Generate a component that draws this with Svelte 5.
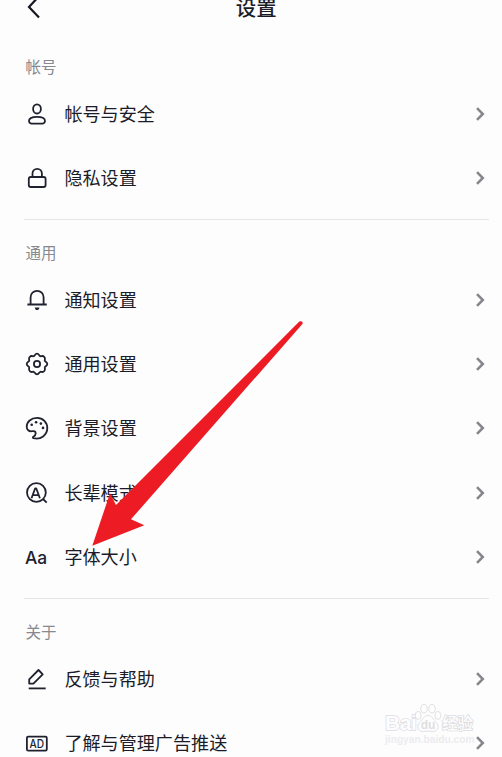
<script>
	const sections = [
		{
			title: '帐号',
			items: [
				{ icon: 'user', label: '帐号与安全' },
				{ icon: 'lock', label: '隐私设置' }
			]
		},
		{
			title: '通用',
			items: [
				{ icon: 'bell', label: '通知设置' },
				{ icon: 'gear', label: '通用设置' },
				{ icon: 'palette', label: '背景设置' },
				{ icon: 'elder', label: '长辈模式' },
				{ icon: 'font', label: '字体大小' }
			]
		},
		{
			title: '关于',
			items: [
				{ icon: 'edit', label: '反馈与帮助' },
				{ icon: 'ad', label: '了解与管理广告推送' }
			]
		}
	];
</script>

<div class="screen">
	<header>
		<svg class="back" viewBox="0 0 14 24">
			<path d="M13 1.2 3 12l10 10.6" />
		</svg>
		<h1>设置</h1>
	</header>

	{#each sections as section}
		<section>
			<h2>{section.title}</h2>
			{#each section.items as item}
				<div class="row">
					<svg class="icon" viewBox="0 0 24 24">
						{#if item.icon === 'user'}
							<ellipse cx="12" cy="6.9" rx="3.9" ry="4.6" />
							<path d="M12 14.9C7.2 14.9 4 16.4 4 18.9C4 21 6 21.7 8.4 21.7H15.6C18 21.7 20 21 20 18.9C20 16.4 16.8 14.9 12 14.9Z" />
						{:else if item.icon === 'lock'}
							<rect x="3.8" y="11" width="16.8" height="10" rx="2" />
							<path d="M7.5 11V7.5a4.7 4.7 0 0 1 9.4 0V11" />
						{:else if item.icon === 'bell'}
							<path d="M2.4 16.5h19.4M5.6 16.2V9.3a6.5 6.5 0 0 1 13 0V16.2" />
							<path class="solid" d="M9.7 19.5h4.8c-.3 1.7-1.2 2.6-2.4 2.6s-2.1-.9-2.4-2.6Z" />
						{:else if item.icon === 'gear'}
							<path d="M12 1.7C14 1.7 14.2 3.9 15.3 4.2C16.3 4.5 17.7 3.1 19.2 4.8C20.9 6.3 19.5 7.7 19.8 8.7C20.1 9.8 22.3 10 22.3 12C22.3 14 20.1 14.2 19.8 15.3C19.5 16.3 20.9 17.7 19.2 19.2C17.7 20.9 16.3 19.5 15.3 19.8C14.2 20.1 14 22.3 12 22.3C10 22.3 9.8 20.1 8.7 19.8C7.7 19.5 6.3 20.9 4.8 19.2C3.1 17.7 4.5 16.3 4.2 15.3C3.9 14.2 1.7 14 1.7 12C1.7 10 3.9 9.8 4.2 8.7C4.5 7.7 3.1 6.3 4.8 4.8C6.3 3.1 7.7 4.5 8.7 4.2C9.8 3.9 10 1.7 12 1.7Z" />
							<circle cx="12" cy="12" r="3.1" />
						{:else if item.icon === 'palette'}
							<path d="M8.3 20.7C7.6 21.1 7.6 21.9 8.5 22.2C15.8 24.1 22.3 19 22.3 12.1C22.3 6.3 17.9 1.8 12.1 1.8C6 1.8 1.7 6 1.7 10.7C1.7 13.8 4 15.7 6.9 15.2C9.2 14.8 10.7 15.4 10.7 17.3C10.7 19 9.8 20 8.3 20.7Z" />
							<circle class="solid" cx="6.7" cy="8.7" r="1.3" />
							<circle class="solid" cx="11.1" cy="6.3" r="1.3" />
							<circle class="solid" cx="15.9" cy="7.6" r="1.3" />
							<circle class="solid" cx="18" cy="11.9" r="1.3" />
						{:else if item.icon === 'elder'}
							<circle cx="11.4" cy="11.5" r="9.4" />
							<path d="m18 18 3.7 3.7" />
							<path d="m6.5 17.3 3.7-10h1l3.7 10M7.8 14.2h5.8" />
						{:else if item.icon === 'font'}
							<text class="aa" x="0" y="19.3" textLength="22.2" lengthAdjust="spacingAndGlyphs">Aa</text>
						{:else if item.icon === 'edit'}
							<path d="M4.2 12.4 13.5 3l4.2 4.3-9.3 9.3H4.2Z" />
							<path d="M3.7 21.4h17" />
						{:else if item.icon === 'ad'}
							<rect x="1.9" y="5.7" width="19.9" height="13.9" rx="1.3" />
							<text class="ad" x="4.5" y="16.7" textLength="14.5" lengthAdjust="spacingAndGlyphs">AD</text>
						{/if}
					</svg>
					<span class="label">{item.label}</span>
					<svg class="chevron" viewBox="0 0 10 16">
						<path d="m2 2.2 5.8 5.8L2 13.8" />
					</svg>
				</div>
			{/each}
		</section>
	{/each}

	<svg class="pointer" viewBox="0 0 502 757">
		<path d="M92.3 545.7 110 493.3 116 505 299.3 321.6Q301.5 320.5 302.6 322.3Q302.9 323.3 302.2 324.2L131 519.3 144.3 525.3Z" />
	</svg>

	<div class="watermark">
		<div class="brand">
			<span class="bai">Bai</span>
			<svg class="paw" viewBox="0 0 28 30">
				<ellipse cx="4.2" cy="12.4" rx="3" ry="4" />
				<ellipse cx="10" cy="5.7" rx="3.2" ry="4.3" />
				<ellipse cx="18" cy="5.7" rx="3.2" ry="4.3" />
				<ellipse cx="23.8" cy="12.4" rx="3" ry="4" />
				<path d="M14 12.5c4 0 5.3 4 8.2 6.8 3.3 3.2 2 9-2.6 9.2-2.2.1-3.5-.5-5.6-.5s-3.4.6-5.6.5c-4.6-.2-5.9-6-2.6-9.2 2.900-2.800 4.200-6.800 8.200-6.800Z" />
				<text x="6.7" y="25.6">du</text>
			</svg>
			<span class="jingyan">经验</span>
		</div>
		<div class="url">jingyan.baidu.com</div>
	</div>
</div>

<style>
	:global(body) {
		background: #fdfdfe;
	}

	.screen {
		position: relative;
		width: 502px;
		height: 757px;
		overflow: hidden;
		box-sizing: border-box;
		background: #fdfdfe;
		color: #1b1c28;
		font-family: 'Noto Sans CJK SC', sans-serif;
	}

	header {
		display: flex;
		align-items: flex-start;
		height: 34px;
		padding-left: 25.5px;
	}

	.back {
		flex: none;
		width: 14px;
		height: 24px;
		margin-top: -5.5px;
		fill: none;
		stroke: #161823;
		stroke-width: 2.2;
	}

	h1 {
		flex: 1;
		margin: -8px 29px 0 0;
		font-size: 20.4px;
		font-weight: 500;
		line-height: 30px;
		text-align: center;
	}

	section {
		padding: 17px 0 8.6px;
	}

	section + section {
		border-top: 1px solid transparent;
		border-image: linear-gradient(90deg, transparent 25px, #e6e6e8 25px, #e6e6e8 488px, transparent 488px) 1;
		border-width: 1px 0 0;
	}

	h2 {
		margin: 0 0 1px;
		padding-left: 25.5px;
		font-size: 15.5px;
		font-weight: 400;
		line-height: 30px;
		color: #88898f;
	}

	.row {
		display: flex;
		align-items: center;
		height: 64.2px;
		padding: 0 17px 0 25.4px;
	}

	.icon {
		flex: none;
		width: 24px;
		height: 24px;
		overflow: visible;
		fill: none;
		stroke: #20212e;
		stroke-width: 1.8;
		stroke-linejoin: round;
	}

	.icon .solid,
	.icon text {
		fill: #20212e;
		stroke: none;
	}

	.icon .aa {
		font: 500 17.5px Inter, sans-serif;
	}

	.icon .ad {
		font: 500 11.5px Inter, sans-serif;
	}

	.label {
		flex: 1;
		margin: -2px 0 0 15px;
		font-size: 18.1px;
		line-height: 26px;
	}

	.chevron {
		width: 10px;
		height: 16px;
		fill: none;
		stroke: #85868b;
		stroke-width: 2.5;
	}

	/* red arrow over the list, pointing at the font size row */
	.pointer {
		position: absolute;
		inset: 0;
		width: 502px;
		height: 757px;
		fill: #ed1c24;
	}

	.watermark {
		position: absolute;
		left: 385px;
		top: 702px;
		width: 92px;
		color: #fdfdfe;
	}

	.brand {
		display: flex;
		height: 31px;
		align-items: flex-end;
	}

	.bai,
	.jingyan {
		-webkit-text-stroke: 1.6px #dedee1;
		paint-order: stroke fill;
	}

	.bai {
		width: 29px;
		font: bold 21px/20px 'Liberation Sans', sans-serif;
		letter-spacing: -0.4px;
	}

	.paw {
		flex: none;
		width: 28px;
		height: 30px;
		fill: #fdfdfe;
		stroke: #dcdcdf;
		stroke-width: 0.9;
	}

	.paw text {
		font: bold 12px 'Liberation Sans', sans-serif;
		fill: #dedee1;
		stroke: none;
	}

	.jingyan {
		font-size: 15.5px;
		font-weight: 500;
		line-height: 22px;
		white-space: nowrap;
	}

	.url {
		font: bold 10.2px/14px 'Liberation Sans', sans-serif;
		color: #ececee;
		white-space: nowrap;
	}
</style>
